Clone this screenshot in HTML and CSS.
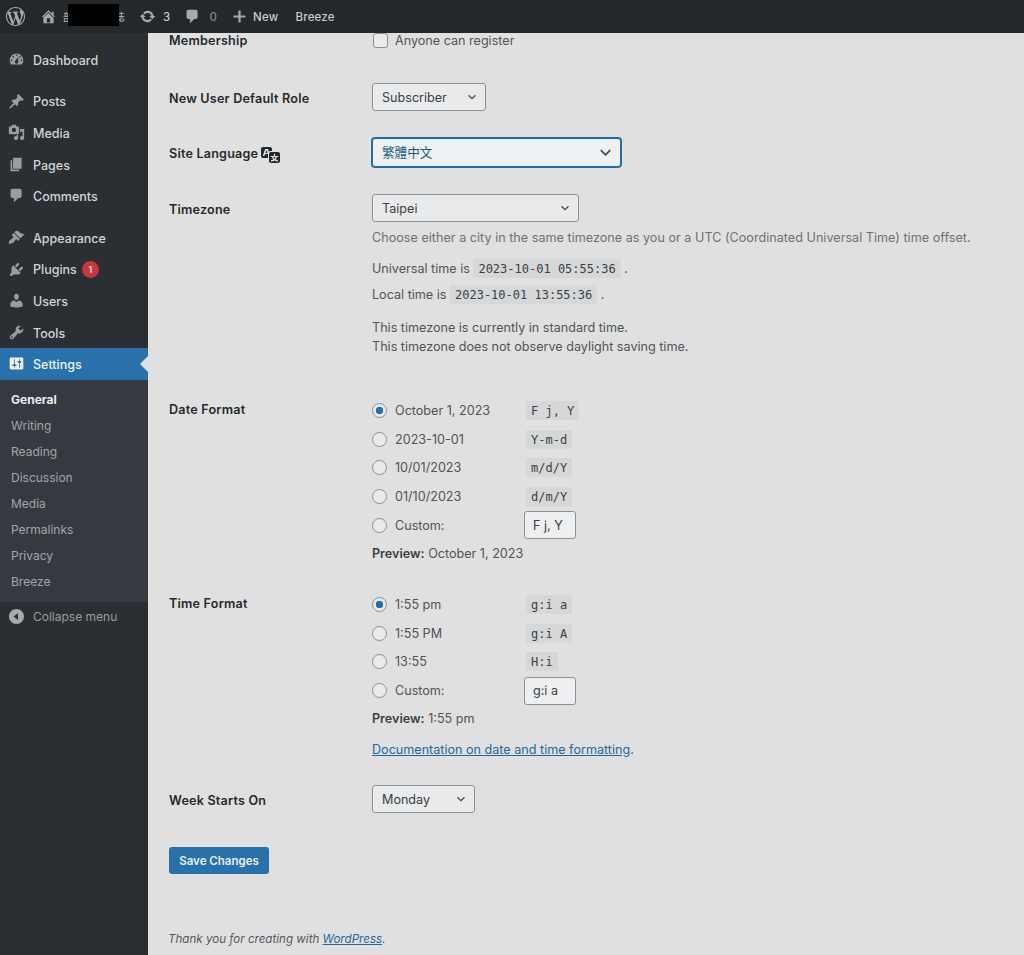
FILE: index.html
```html
<!DOCTYPE html>
<html lang="en">
  <head>
    <meta charset="UTF-8" />
    <meta name="viewport" content="width=device-width, initial-scale=1" />
    <title>General Settings</title>
    <link rel="stylesheet" href="styles.css">
  </head>
  <body>
    <header class="adminbar">
      <svg class="bar-logo" viewBox="0 0 20 20"><path d="M20 10c0-5.51-4.49-10-10-10C4.48 0 0 4.49 0 10c0 5.52 4.48 10 10 10 5.51 0 10-4.48 10-10zM7.78 15.37L4.37 6.22c.55-.02 1.17-.08 1.17-.08.5-.06.44-1.13-.06-1.11 0 0-1.45.11-2.37.11-.18 0-.37 0-.58-.01C4.12 2.69 6.87 1.11 10 1.11c2.33 0 4.45.87 6.05 2.34-.68-.11-1.65.39-1.65 1.58 0 .74.45 1.36.9 2.1.35.61.55 1.36.55 2.46 0 1.49-1.4 5-1.4 5l-3.03-8.37c.54-.02.82-.17.82-.17.5-.05.44-1.25-.06-1.22 0 0-1.44.12-2.38.12-.87 0-2.33-.12-2.33-.12-.5-.03-.56 1.2-.06 1.22l.92.08 1.26 3.41zM17.41 10c.24-.64.74-1.87.43-4.25.7 1.29 1.05 2.71 1.05 4.25 0 3.29-1.73 6.24-4.4 7.78.97-2.59 1.94-5.2 2.92-7.78zM6.1 18.09C3.12 16.65 1.11 13.53 1.11 10c0-1.3.23-2.48.72-3.59C3.25 10.3 4.67 14.2 6.1 18.09zm4.03-6.63l2.58 6.98c-.86.29-1.76.45-2.71.45-.79 0-1.57-.11-2.29-.33.81-2.38 1.62-4.74 2.42-7.1z"/></svg>
      <svg class="bar-icon home" viewBox="0 0 20 20"><path d="M16 8.5l1.53 1.53-1.06 1.06L10 4.62l-6.47 6.47-1.06-1.06L10 2.5l4 4v-2h2v4zm-6-2.46l6 5.99V18H4v-6.97zM12 17v-5H8v5h4z"/></svg>
      <span class="site-name"><span>部</span><span>誌</span><span class="site-mask"></span></span>
      <svg class="bar-icon update" viewBox="0 0 20 20"><path d="M10.2 3.28c3.53 0 6.43 2.61 6.92 6h2.08l-3.5 4-3.5-4h2.32c-.45-1.97-2.21-3.45-4.32-3.45-1.45 0-2.73.71-3.54 1.78L4.95 5.66C6.23 4.2 8.11 3.28 10.2 3.28zm-.4 13.44c-3.52 0-6.43-2.61-6.92-6H.8l3.5-4c1.17 1.33 2.33 2.67 3.5 4H5.48c.45 1.97 2.21 3.45 4.32 3.45 1.45 0 2.73-.71 3.54-1.78l1.71 1.95c-1.28 1.46-3.15 2.38-5.25 2.38z"/></svg>
      <span class="bar-text count">3</span>
      <svg class="bar-icon comment" viewBox="0 0 20 20"><path d="M5 2h9c1.1 0 2 .9 2 2v7c0 1.1-.9 2-2 2h-2l-5 5v-5H5c-1.1 0-2-.9-2-2V4c0-1.1.9-2 2-2z"/></svg>
      <span class="bar-text zero">0</span>
      <svg class="bar-icon plus" viewBox="0 0 20 20"><path d="M17 8.7v2.6h-5.7V17H8.7v-5.7H3V8.7h5.700V3h2.600v5.700H17z"/></svg>
      <span class="bar-text new">New</span>
      <span class="bar-text">Breeze</span>
    </header>

    <div class="layout">
      <nav class="sidebar">
        <ul class="menu">
          <li class="menu-item gap-after">
            <svg viewBox="0 0 20 20"><path d="M3.76 16h12.48c1.1-1.37 1.76-3.11 1.76-5 0-4.42-3.58-8-8-8s-8 3.58-8 8c0 1.89.66 3.63 1.76 5zM10 4c.55 0 1 .45 1 1s-.45 1-1 1-1-.45-1-1 .45-1 1-1zM6 6c.55 0 1 .45 1 1s-.45 1-1 1-1-.45-1-1 .45-1 1-1zm8 0c.55 0 1 .45 1 1s-.45 1-1 1-1-.45-1-1 .45-1 1-1zm-5.37 5.55L12 7v6c0 1.1-.9 2-2 2s-2-.9-2-2c0-.57.24-1.08.63-1.45zM4 10c.55 0 1 .45 1 1s-.45 1-1 1-1-.45-1-1 .45-1 1-1zm12 0c.55 0 1 .45 1 1s-.45 1-1 1-1-.45-1-1 .45-1 1-1z"/></svg>
            Dashboard
          </li>
          <li class="menu-item">
            <svg viewBox="0 0 20 20"><path d="M10.44 3.02l1.82-1.82 6.36 6.35-1.83 1.82c-1.05-.68-2.48-.57-3.41.36l-.75.75c-.92.93-1.04 2.35-.35 3.41l-1.83 1.82-2.41-2.41-2.8 2.79c-.42.42-3.38 2.71-3.8 2.29s1.86-3.39 2.28-3.81l2.79-2.79L4.1 9.36l1.83-1.82c1.05.69 2.48.57 3.4-.36l.75-.75c.93-.92 1.05-2.35.36-3.41z"/></svg>
            Posts
          </li>
          <li class="menu-item">
            <svg viewBox="0 0 20 20"><path d="M13 11V4c0-.55-.45-1-1-1h-1.67L9 1H5L3.67 3H2c-.55 0-1 .45-1 1v7c0 .55.45 1 1 1h10c.55 0 1-.45 1-1zM7 4.5c1.38 0 2.5 1.12 2.5 2.5S8.38 9.5 7 9.5 4.5 8.38 4.5 7 5.62 4.5 7 4.5zM14 6h5v10.5c0 1.38-1.12 2.5-2.5 2.5S14 17.88 14 16.5s1.12-2.5 2.5-2.5c.17 0 .34.02.5.05V9h-3V6zm-4 8.05V13h2v3.5c0 1.38-1.12 2.5-2.5 2.5S7 17.88 7 16.5 8.12 14 9.5 14c.17 0 .34.02.5.05z"/></svg>
            Media
          </li>
          <li class="menu-item">
            <svg viewBox="0 0 20 20"><path d="M6 15V2h10v13H6zm-1 1h8v2H3V5h2v11z"/></svg>
            Pages
          </li>
          <li class="menu-item gap-after">
            <svg viewBox="0 0 20 20"><path d="M5 2h9c1.1 0 2 .9 2 2v7c0 1.1-.9 2-2 2h-2l-5 5v-5H5c-1.1 0-2-.9-2-2V4c0-1.1.9-2 2-2z"/></svg>
            Comments
          </li>
          <li class="menu-item">
            <svg viewBox="0 0 20 20"><path d="M14.48 11.06L7.41 3.99l1.5-1.5c.5-.56 2.3-.47 3.51.32 1.21.8 1.43 1.28 2.91 2.1 1.18.64 2.45 1.26 4.45.85zm-.71.71L6.7 4.7 4.93 6.47c-.39.39-.39 1.02 0 1.41l1.06 1.06c.39.39.39 1.03 0 1.42-.6.6-1.43 1.11-2.21 1.69-.35.26-.7.53-1.01.84C1.43 13.23.78 15.78 1.04 17.3c1.53.26 4.07-.39 5.42-1.73.31-.31.58-.66.84-1.01.58-.78 1.09-1.61 1.69-2.21.39-.39 1.03-.39 1.42 0l1.06 1.06c.39.39 1.02.39 1.41 0z"/></svg>
            Appearance
          </li>
          <li class="menu-item">
            <svg viewBox="0 0 20 20"><path d="M13.11 4.36L9.87 7.6 8 5.73l3.24-3.24c.35-.34 1.05-.2 1.56.32.52.51.66 1.21.31 1.55zm-8 1.77l.91-1.12 9.01 9.01-1.19.84c-.71.71-2.63 1.16-3.82 1.16H6.14L4.9 17.26c-.59.59-1.54.59-2.12 0-.59-.58-.59-1.53 0-2.12l1.24-1.24v-3.88c0-1.13.4-3.19 1.09-3.89zm7.26 3.97l3.24-3.24c.34-.35 1.04-.21 1.55.31.52.51.66 1.21.31 1.55l-3.24 3.25z"/></svg>
            Plugins <span class="badge">1</span>
          </li>
          <li class="menu-item">
            <svg viewBox="0 0 20 20"><path d="M10 9.25c-2.27 0-2.73-3.44-2.73-3.44C7 4.02 7.82 2 9.97 2c2.16 0 2.98 2.02 2.71 3.81 0 0-.41 3.44-2.68 3.44zm0 2.57L12.72 10c2.39 0 4.52 2.33 4.52 4.53v2.49s-3.65 1.13-7.24 1.13c-3.65 0-7.24-1.13-7.24-1.13v-2.49c0-2.25 1.94-4.48 4.47-4.48z"/></svg>
            Users
          </li>
          <li class="menu-item">
            <svg viewBox="0 0 20 20"><path d="M16.68 9.77c-1.34 1.34-3.3 1.67-4.95.99l-5.41 6.52c-.99.99-2.59.99-3.58 0s-.99-2.59 0-3.57l6.52-5.42c-.68-1.65-.35-3.61.99-4.95 1.28-1.28 3.12-1.62 4.72-1.06l-2.89 2.89 2.82 2.82 2.86-2.87c.53 1.58.18 3.39-1.08 4.65zM3.81 16.21c.4.39 1.04.39 1.43 0 .4-.4.4-1.04 0-1.43-.39-.4-1.03-.4-1.43 0-.39.39-.39 1.03 0 1.43z"/></svg>
            Tools
          </li>
          <li class="menu-item current">
            <svg viewBox="0 0 20 20"><path d="M18 16V4c0-.55-.45-1-1-1H3c-.55 0-1 .45-1 1v12c0 .55.45 1 1 1h14c.55 0 1-.45 1-1zM8 11h1c.55 0 1 .45 1 1s-.45 1-1 1H8v1.5c0 .28-.22.5-.5.5s-.5-.22-.5-.5V13H6c-.55 0-1-.45-1-1s.45-1 1-1h1V5.5c0-.28.22-.5.5-.5s.5.22.5.5V11zm5-2h-1c-.55 0-1-.45-1-1s.45-1 1-1h1V5.5c0-.28.22-.5.5-.5s.5.22.5.5V7h1c.55 0 1 .45 1 1s-.45 1-1 1h-1v5.5c0 .28-.22.5-.5.5s-.5-.22-.5-.5V9z"/></svg>
            Settings
          </li>
        </ul>
        <ul class="submenu">
          <li class="active">General</li>
          <li>Writing</li>
          <li>Reading</li>
          <li>Discussion</li>
          <li>Media</li>
          <li>Permalinks</li>
          <li>Privacy</li>
          <li>Breeze</li>
        </ul>
        <div class="collapse">
          <svg viewBox="0 0 20 20"><path d="M10 20c5.52 0 10-4.48 10-10S15.52 0 10 0 0 4.48 0 10s4.48 10 10 10zm2-14.5v9L6 10l6-4.500z"/></svg>
          Collapse menu
        </div>
      </nav>

      <main class="content">
        <form class="settings">
          <div class="row row-membership">
            <div class="label">Membership</div>
            <div class="field">
              <label class="check"><input type="checkbox" /> Anyone can register</label>
            </div>
          </div>

          <div class="row row-role">
            <div class="label">New User Default Role</div>
            <div class="field">
              <select class="select select-role"><option>Subscriber</option></select>
            </div>
          </div>

          <div class="row row-lang">
            <div class="label">Site Language
              <svg class="lang-icon" viewBox="0 0 20 20"><path d="M11 7H9.49c-.63 0-1.25.3-1.59.7L7 5H4.13l-2.39 7h1.69l.74-2H7v4H2c-1.1 0-2-.9-2-2V5c0-1.1.9-2 2-2h7c1.1 0 2 .9 2 2v2zM6.51 9H4.49l1-2.93zM10 8h7c1.1 0 2 .9 2 2v7c0 1.1-.9 2-2 2h-7c-1.1 0-2-.9-2-2v-7c0-1.1.9-2 2-2zm7.25 5v-1.08h-3.17V9.75h-1.16v2.17H9.75V13h1.28c.11.85.56 1.85 1.28 2.62-.87.36-1.89.62-2.31.62-.01.02.22.97.2 1.46.84 0 2.21-.5 3.28-1.15 1.09.65 2.48 1.15 3.34 1.15-.02-.49.2-1.44.2-1.46-.43 0-1.49-.27-2.38-.63.7-.77 1.14-1.77 1.25-2.61h1.36zm-3.81 1.93c-.5-.46-.85-1.13-1.01-1.93h2.09c-.17.8-.51 1.47-1 1.93l-.04.03s-.03-.02-.04-.03z"/></svg>
            </div>
            <div class="field">
              <select class="select select-lang"><option>繁體中文</option></select>
            </div>
          </div>

          <div class="row row-timezone">
            <div class="label">Timezone</div>
            <div class="field">
              <select class="select select-tz"><option>Taipei</option></select>
              <p class="description">Choose either a city in the same timezone as you or a UTC (Coordinated Universal Time) time offset.</p>
              <p class="time-line">Universal time is <code>2023-10-01 05:55:36</code> .</p>
              <p class="time-line">Local time is <code>2023-10-01 13:55:36</code> .</p>
              <p class="tz-note">This timezone is currently in standard time.<br />This timezone does not observe daylight saving time.</p>
            </div>
          </div>

          <div class="row row-date">
            <div class="label">Date Format</div>
            <div class="field">
              <label class="choice"><input type="radio" name="date" checked /><span class="choice-text">October 1, 2023</span><code>F j, Y</code></label>
              <label class="choice"><input type="radio" name="date" /><span class="choice-text">2023-10-01</span><code>Y-m-d</code></label>
              <label class="choice"><input type="radio" name="date" /><span class="choice-text">10/01/2023</span><code>m/d/Y</code></label>
              <label class="choice"><input type="radio" name="date" /><span class="choice-text">01/10/2023</span><code>d/m/Y</code></label>
              <label class="choice choice-custom"><input type="radio" name="date" /><span class="choice-text">Custom:</span><input class="small-text" type="text" value="F j, Y" /></label>
              <p class="preview"><b>Preview:</b> October 1, 2023</p>
            </div>
          </div>

          <div class="row row-time">
            <div class="label">Time Format</div>
            <div class="field">
              <label class="choice"><input type="radio" name="time" checked /><span class="choice-text">1:55 pm</span><code>g:i a</code></label>
              <label class="choice"><input type="radio" name="time" /><span class="choice-text">1:55 PM</span><code>g:i A</code></label>
              <label class="choice"><input type="radio" name="time" /><span class="choice-text">13:55</span><code>H:i</code></label>
              <label class="choice choice-custom"><input type="radio" name="time" /><span class="choice-text">Custom:</span><input class="small-text" type="text" value="g:i a" /></label>
              <p class="preview"><b>Preview:</b> 1:55 pm</p>
              <p class="doc-link"><a href="#">Documentation on date and time formatting</a>.</p>
            </div>
          </div>

          <div class="row row-week">
            <div class="label">Week Starts On</div>
            <div class="field">
              <select class="select select-week"><option>Monday</option></select>
            </div>
          </div>

          <button class="save" type="button">Save Changes</button>
        </form>
        <footer class="footer">Thank you for creating with <a href="#">WordPress</a>.</footer>
      </main>
    </div>
  </body>
</html>
```

FILE: styles.css
```css
* {
  box-sizing: border-box;
}
body {
  margin: 0;
  height: 955px;
  overflow: hidden;
  background-color: #e0e0e1;
  color: #3a3f44;
  font-family: Inter, "Noto Sans CJK TC", sans-serif;
  font-size: 12.6px;
}
p {
  margin: 0;
}
ul {
  list-style: none;
  margin: 0;
  padding: 0;
}

/* top bar */
.adminbar {
  display: flex;
  align-items: center;
  height: 33px;
  padding-left: 6px;
  background-color: #25282b;
  color: #c9cccf;
  font-size: 11.5px;
  font-weight: 500;
  letter-spacing: .2px;
}
.adminbar svg {
  fill: #a7aaad;
  flex: none;
}
.bar-logo {
  width: 19px;
  height: 19px;
}
.bar-icon {
  width: 17px;
  height: 17px;
}
.home {
  margin-left: 15px;
}
.site-name {
  position: relative;
  display: flex;
  justify-content: space-between;
  width: 62px;
  margin-left: 6px;
  font-size: 10px;
  color: #a7aaad;
}
.site-mask {
  position: absolute;
  left: 5px;
  top: -5px;
  width: 51px;
  height: 22px;
  background-color: #000;
}
.update {
  margin-left: 14px;
}
.count {
  margin-left: 7px;
}
.comment {
  margin-left: 14px;
}
.zero {
  margin-left: 8px;
  color: #83878b;
}
.plus {
  margin-left: 14px;
}
.new {
  margin-left: 5px;
  margin-right: 17px;
}

/* side menu */
.layout {
  display: flex;
  height: 922px;
}
.sidebar {
  flex: none;
  width: 148px;
  background-color: #2b2e32;
  color: #d2d4d6;
  font-size: 12.5px;
}
.menu {
  padding-top: 11px;
}
.menu-item {
  position: relative;
  display: flex;
  align-items: center;
  height: 31.6px;
  padding: 1px 0 0 33px;
  font-weight: 500;
}
.menu-item svg {
  position: absolute;
  left: 8px;
  top: 7px;
  width: 17px;
  height: 17px;
  fill: #9a9d9f;
}
.gap-after {
  margin-bottom: 10px;
}
.badge {
  display: inline-block;
  width: 17px;
  height: 17px;
  margin-left: 5px;
  border-radius: 50%;
  background-color: #c9363b;
  color: #eee;
  font-size: 9px;
  line-height: 17px;
  text-align: center;
}
.current {
  background-color: #2871ab;
  color: #f1f3f4;
}
.current svg {
  fill: #eef1f3;
}
.current::after {
  content: "";
  position: absolute;
  right: 0;
  top: 8px;
  border: 8px solid transparent;
  border-left-width: 0;
  border-right-color: #e0e0e1;
}
.submenu {
  padding: 7px 0;
  background-color: #363a40;
  color: #a2a5a8;
  font-size: 12px;
}
.submenu li {
  height: 26px;
  padding-left: 11px;
  line-height: 26px;
}
.submenu .active {
  color: #eceded;
  font-weight: 700;
}
.collapse {
  display: flex;
  align-items: center;
  gap: 9px;
  height: 30px;
  padding-left: 9px;
  color: #9a9d9f;
  font-size: 12px;
}
.collapse svg {
  width: 15px;
  height: 15px;
  fill: #a7aaad;
}

/* settings form */
.content {
  flex: 1;
  padding-left: 21px;
  overflow: hidden;
}
.row {
  display: flex;
}
.label {
  flex: none;
  width: 203px;
  color: #26292c;
  font-weight: 600;
  letter-spacing: .2px;
}
.field {
  flex: 1;
}
.row-membership {
  height: 50px;
}
.row-role {
  height: 55px;
}
.row-role .label,
.row-week .label,
.row-timezone .label {
  padding-top: 8px;
}
.row-lang {
  height: 56px;
}
.row-lang .label {
  display: flex;
  align-items: center;
  gap: 3px;
  height: 31px;
}
.lang-icon {
  width: 20px;
  height: 20px;
  fill: #26292c;
}
.row-timezone {
  height: 202px;
}
.row-date {
  height: 194px;
}
.row-time {
  height: 195px;
}
.row-date .label,
.row-time .label {
  padding-top: 6px;
}
.row-week {
  height: 62px;
}

.check {
  display: flex;
  align-items: center;
  gap: 7px;
  height: 14px;
  padding-top: 1px;
  color: #4f5458;
}
.check input {
  appearance: none;
  width: 15px;
  height: 15px;
  margin: -1px 0 0 1px;
  border: 1px solid #8c8f93;
  border-radius: 3px;
  background-color: #e9eaeb;
}

.select {
  display: block;
  appearance: none;
  height: 28px;
  padding: 0 24px 0 9px;
  border: 1px solid #8c8f93;
  border-radius: 3px;
  background: #e9eaeb url("data:image/svg+xml,%3Csvg xmlns='http://www.w3.org/2000/svg' width='20' height='20'%3E%3Cpath d='M5 7.500l5 5 5-5' fill='none' stroke='%23444' stroke-width='1.700'/%3E%3C/svg%3E") no-repeat right 6px center / 14px 14px;
  color: #3a3f44;
  font-family: inherit;
  font-size: 12.6px;
}
.select-role {
  width: 114px;
}
.select-lang {
  width: 249px;
  height: 29px;
  border: 1px solid #1f6ea6;
  box-shadow: 0 0 0 1px #1f6ea6;
  background-color: #edf1f3;
  background-position: right 5px center;
  background-size: 19px 19px;
  color: #1d5a86;
}
.select-tz {
  width: 207px;
}
.select-week {
  width: 103px;
}
.description {
  margin-top: 7px;
  color: #6b7075;
  letter-spacing: .02px;
  line-height: 18px;
}
.time-line {
  margin-top: 13px;
  line-height: 18px;
  color: #4f5458;
}
.time-line + .time-line {
  margin-top: 8px;
}
.tz-note {
  margin-top: 14px;
  line-height: 19px;
  color: #4f5458;
}

code {
  padding: 3px 5px 2px;
  background-color: #d6d7d8;
  color: #3a3f44;
  font-family: "DejaVu Sans Mono", monospace;
  font-size: 12px;
}

.choice {
  display: flex;
  align-items: center;
  height: 28.75px;
  color: #4f5458;
}
.choice input[type="radio"] {
  appearance: none;
  flex: none;
  width: 15px;
  height: 15px;
  margin: 0 8px 0 0;
  border: 1px solid #8c8f93;
  border-radius: 50%;
  background-color: #e9eaeb;
}
.choice input[type="radio"]:checked {
  background: radial-gradient(circle, #2271b1 0 3.5px, #e9eaeb 4px);
}
.choice-text {
  width: 129px;
  flex: none;
}
.choice code {
  margin-left: 2px;
}
.small-text {
  width: 52px;
  height: 28px;
  padding: 0 8px;
  border: 1px solid #8c8f93;
  border-radius: 3px;
  background-color: #eeeff0;
  color: #3a3f44;
  font-family: inherit;
  font-size: 12.6px;
}
.preview {
  margin-top: 5px;
  line-height: 18px;
  color: #4f5458;
}
.preview b {
  font-weight: 600;
  color: #3a3f44;
}
.doc-link {
  margin-top: 13px;
  line-height: 18px;
  color: #4f5458;
}
.doc-link a,
.footer a {
  color: #2268a0;
}
.save {
  display: block;
  width: 100px;
  height: 27px;
  padding: 0;
  border: 0;
  border-radius: 3px;
  background-color: #2871ab;
  color: #e8eef3;
  font-family: inherit;
  font-size: 11.5px;
  font-weight: 600;
}
.footer {
  margin: 58px 0 0 -1px;
  color: #54595d;
  font-size: 11.6px;
  font-style: italic;
}
```
